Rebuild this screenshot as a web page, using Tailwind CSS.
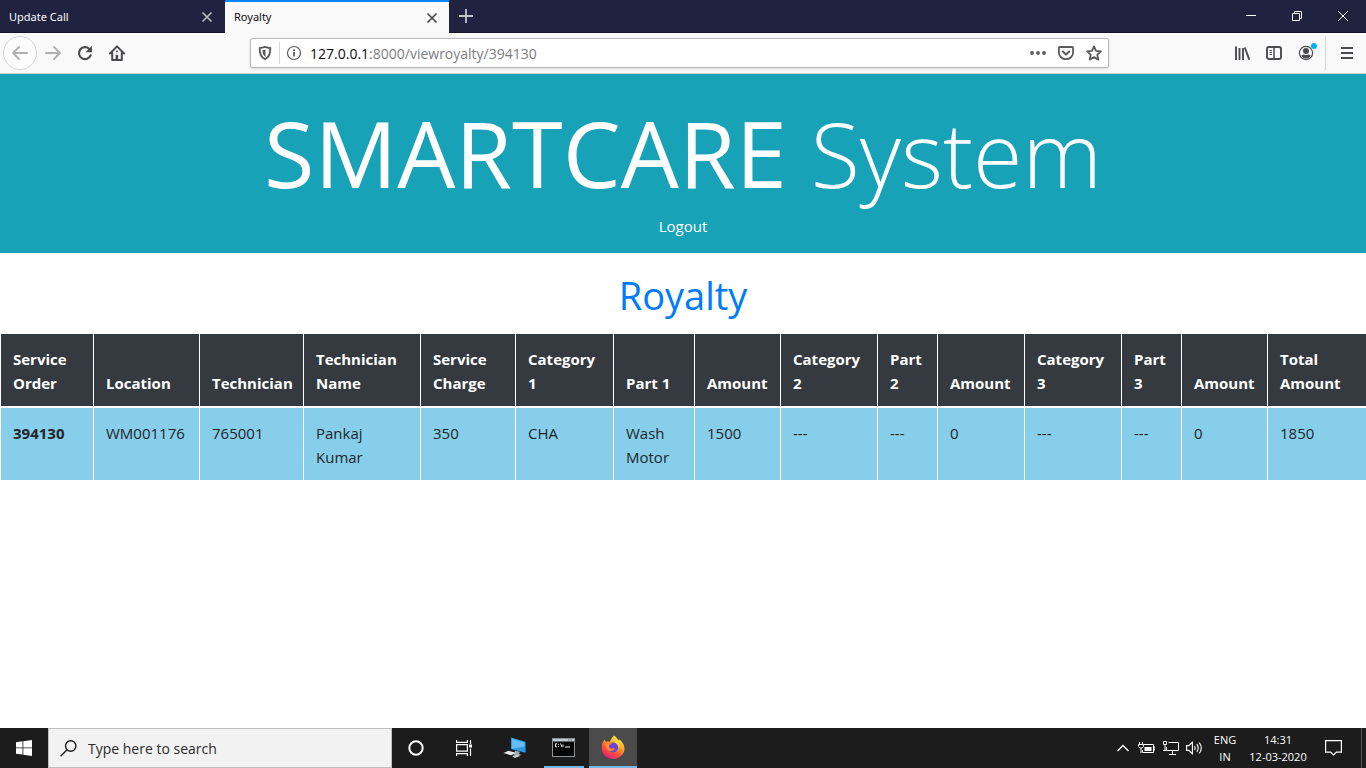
<!DOCTYPE html>
<html lang="en">
<head>
<meta charset="utf-8">
<title>Royalty</title>
<script src="https://cdn.jsdelivr.net/npm/@tailwindcss/browser@4"></script>
</head>
<body class="flex h-screen flex-col overflow-hidden bg-white font-['Open_Sans','Noto_Sans',sans-serif] text-[#212529]">

<!-- Tab strip -->
<div class="flex h-[33px] shrink-0 items-stretch border-b border-[#12132a] bg-[#202340]">
  <div class="flex w-[225px] items-center justify-between pr-[11px] pl-[9px] pt-[2px] text-[#f9f9fa]">
    <span class="font-['Noto_Sans',sans-serif] text-[11px]">Update Call</span>
    <button aria-label="Close Update Call"><svg class="block size-3.5" viewBox="0 0 14 14" fill="none" stroke="#b9bac4" stroke-width="1.7"><path d="M2.5 2.5l9 9M11.5 2.5l-9 9"/></svg></button>
  </div>
  <div class="-mb-px flex w-[224px] items-center justify-between border-t-2 border-[#0a84ff] bg-[#f9f9fa] pr-[10px] pl-[9px] text-[#0c0c0d]">
    <span class="font-['Noto_Sans',sans-serif] text-[11px]">Royalty</span>
    <button aria-label="Close Royalty"><svg class="block size-3.5" viewBox="0 0 14 14" fill="none" stroke="#4a4a4f" stroke-width="1.7"><path d="M2.5 2.5l9 9M11.5 2.5l-9 9"/></svg></button>
  </div>
  <button class="flex w-[34px] items-center justify-center" aria-label="New tab"><svg class="size-4" viewBox="0 0 16 16" stroke="#c4c5cf" stroke-width="1.8"><path d="M8 1v14M1 8h14"/></svg></button>
  <div class="ml-auto flex items-center">
    <button class="flex w-[46px] justify-center" aria-label="Minimize"><svg class="size-2.5" viewBox="0 0 10 10" stroke="#fff"><path d="M0 4.5h10"/></svg></button>
    <button class="flex w-[46px] justify-center" aria-label="Restore"><svg class="size-2.5" viewBox="0 0 10 10" fill="none" stroke="#fff"><path d="M.5 2.5h7v7h-7zM2.5 2.500V.5h7v7h-2"/></svg></button>
    <button class="flex w-[46px] justify-center" aria-label="Close"><svg class="size-2.5" viewBox="0 0 10 10" stroke="#fff"><path d="M0 0l10 10M10 0L0 10"/></svg></button>
  </div>
</div>

<!-- Toolbar -->
<div class="flex h-[41px] shrink-0 items-center border-b border-[#cfcfd1] bg-[#f9f9fa]">
  <div class="flex w-[250px] items-center pl-[3px]">
    <button class="flex size-[34px] items-center justify-center rounded-full border border-[#d4d4d5] bg-[#fcfcfc]" aria-label="Back"><svg class="size-4" viewBox="0 0 16 16" fill="none" stroke="#b1b1b3" stroke-width="2" stroke-linecap="round" stroke-linejoin="round"><path d="M15 8H1.500M7 2L1 8l6 6"/></svg></button>
    <button class="flex w-8 justify-center" aria-label="Forward"><svg class="size-4" viewBox="0 0 16 16" fill="none" stroke="#b1b1b3" stroke-width="2" stroke-linecap="round" stroke-linejoin="round"><path d="M1 8h13.500M9 2l6 6-6 6"/></svg></button>
    <button class="flex w-8 justify-center" aria-label="Reload"><svg class="size-4" viewBox="0 0 16 16"><path d="M12.300 4A6 6 0 1 0 13.600 10.300" fill="none" stroke="#4a4a4f" stroke-width="2.200" stroke-linecap="round"/><path d="M15 .8v6.400H8.600z" fill="#4a4a4f"/></svg></button>
    <button class="flex w-8 justify-center" aria-label="Home"><svg class="size-4" viewBox="0 0 16 16" fill="none" stroke="#4a4a4f" stroke-width="2" stroke-linejoin="round" stroke-linecap="round"><path d="M1 8.500L8 1.400l7 7.100M3.200 8v7h9.600V8"/><path d="M7.900 14V9.800" stroke-width="2.600" stroke-linecap="butt"/><path d="M8 6.500v.1"/></svg></button>
  </div>
  <div class="flex h-[30px] w-[859px] items-center rounded-xs border border-[#b9b9bb] bg-white shadow-sm">
    <svg class="ml-[6px] size-4" viewBox="0 0 16 16"><path d="M8 1.800c2 .8 3.700 1.100 5.300 1.200C13.500 9 11.500 12.500 8 14.200 4.500 12.500 2.500 9 2.700 3 4.300 2.900 6 2.600 8 1.800z" fill="none" stroke="#5a5a5e" stroke-width="1.900" stroke-linejoin="round"/><path d="M8.500 4.500v7.400C6.200 10.500 5.500 8 5.500 5.200z" fill="#5a5a5e"/></svg>
    <span class="ml-[6px] h-[22px] w-px bg-[#d7d7db]"></span>
    <svg class="ml-[6px] size-4" viewBox="0 0 16 16" fill="none" stroke="#5a5a5e"><circle cx="8" cy="8" r="6.500" stroke-width="1.200"/><path d="M8 7v4.500M8 4.200v1.700" stroke-width="1.700"/></svg>
    <div class="ml-[8px] flex-1 pt-[2px] text-[14px] leading-5 text-[#7c7c80]"><span class="text-[#0c0c0d]">127.0.0.1</span>:8000/viewroyalty/394130</div>
    <div class="flex items-center gap-3 pr-[6px]">
      <button aria-label="Page actions"><svg class="block size-4" viewBox="0 0 16 16" fill="#5a5a5e"><circle cx="2" cy="8" r="1.900"/><circle cx="8" cy="8" r="1.900"/><circle cx="14" cy="8" r="1.900"/></svg></button>
      <button aria-label="Save to Pocket"><svg class="block size-4" viewBox="0 0 16 16" fill="none" stroke="#5a5a5e" stroke-width="1.800" stroke-linejoin="round" stroke-linecap="round"><path d="M1.900 2h12.200q1 0 1 1v4.500a7.100 6.700 0 0 1-14.200 0V3q0-1 1-1z"/><path d="M4.800 6.500L8 9.500l3.200-3" stroke-width="2"/></svg></button>
      <button aria-label="Bookmark this page"><svg class="block size-4" viewBox="0 0 16 16" fill="none" stroke="#5a5a5e" stroke-width="1.800" stroke-linejoin="round"><path d="M8 1.400l2 4.500 4.900.5-3.600 3.300 1 4.900L8 12.100l-4.300 2.500 1-4.900L1.100 6.400 6 5.900z"/></svg></button>
    </div>
  </div>
  <div class="ml-auto flex h-full items-center">
    <button class="flex w-8 justify-center" aria-label="Library"><svg class="size-4" viewBox="0 0 16 16" fill="none" stroke="#4a4a4f" stroke-width="1.900"><path d="M2 1.500V15M5.500 3v12M9 3v12M10.800 2.500l4.500 12.200"/></svg></button>
    <button class="flex w-8 justify-center" aria-label="Sidebars"><svg class="size-4" viewBox="0 0 16 16" fill="none" stroke="#4a4a4f"><rect x="1" y="2" width="14" height="12" rx="2" stroke-width="1.900"/><path d="M8 2.500v11" stroke-width="1.500"/><path d="M3.500 5.500H6M3.500 7.500H6M3.500 9.500H6"/></svg></button>
    <button class="relative flex w-8 justify-center" aria-label="Account"><svg class="size-4" viewBox="0 0 16 16"><circle cx="8" cy="8" r="6.600" fill="none" stroke="#4a4a4f" stroke-width="1.200"/><circle cx="8" cy="6" r="3" fill="#4a4a4f"/><path d="M3.200 10.700q1.400-1.300 2.700-1.300 2 1 4.200 0 1.300 0 2.700 1.300a5.500 5.500 0 0 1-9.600 0z" fill="#4a4a4f"/></svg><span class="absolute -top-[2px] right-[5px] size-1.5 rounded-full bg-[#00b3f4]"></span></button>
    <span class="ml-[3px] h-[34px] w-px bg-[#d7d7db]"></span>
    <button class="flex w-[40px] justify-center pl-[2px]" aria-label="Menu"><svg class="size-4" viewBox="0 0 16 16" stroke="#4a4a4f" stroke-width="1.900"><path d="M2 3h12M2 8h12M2 13h12"/></svg></button>
  </div>
</div>

<!-- Page -->
<main class="flex-1 overflow-hidden">
  <header class="bg-[#17a2b8] pt-[21px] pb-[14px] text-center text-white">
    <h1 class="pb-[3px] text-[92px] leading-[116px] font-normal">SMARTCARE <span class="text-[90px] font-light">System</span></h1>
    <a href="#" class="block text-[15px] leading-[25px]">Logout</a>
  </header>
  <h2 class="pt-[18px] pb-[14px] text-center text-[38px] leading-[48px] text-[#007bff]">Royalty</h2>
  <table class="w-full table-fixed border-collapse text-left text-[15px] leading-6">
    <colgroup>
      <col class="w-[93px]"><col class="w-[106px]"><col class="w-[104px]"><col class="w-[117px]"><col class="w-[95px]"><col class="w-[98px]"><col class="w-[81px]"><col class="w-[86px]"><col class="w-[97px]"><col class="w-[60px]"><col class="w-[87px]"><col class="w-[97px]"><col class="w-[60px]"><col class="w-[86px]"><col class="w-[99px]">
    </colgroup>
    <thead class="bg-[#343a40] align-bottom text-white [&_th]:border [&_th]:border-b-2 [&_th]:border-white [&_th]:pt-[13px] [&_th]:pb-[11px] [&_th]:pl-3 [&_th]:font-bold">
      <tr><th>Service<br>Order</th><th>Location</th><th>Technician</th><th>Technician<br>Name</th><th>Service<br>Charge</th><th>Category<br>1</th><th>Part 1</th><th>Amount</th><th>Category<br>2</th><th>Part<br>2</th><th>Amount</th><th>Category<br>3</th><th>Part<br>3</th><th>Amount</th><th>Total<br>Amount</th></tr>
    </thead>
    <tbody class="bg-[#87ceeb] align-top [&_td]:border [&_td]:border-white [&_td]:pt-[13px] [&_td]:pb-[11px] [&_td]:pl-3 [&_th]:border [&_th]:border-white [&_th]:pt-[13px] [&_th]:pb-[11px] [&_th]:pl-3">
      <tr><th scope="row" class="font-bold">394130</th><td>WM001176</td><td>765001</td><td>Pankaj<br>Kumar</td><td>350</td><td>CHA</td><td>Wash<br>Motor</td><td>1500</td><td>---</td><td>---</td><td>0</td><td>---</td><td>---</td><td>0</td><td>1850</td></tr>
    </tbody>
  </table>
</main>

<!-- Taskbar -->
<footer class="flex h-10 shrink-0 items-stretch bg-[#1c1c1c] text-white">
  <button class="flex w-12 items-center justify-center" aria-label="Start"><svg class="size-4" viewBox="0 0 16 16" fill="#fff"><path d="M0 2.200l6.500-.9v6.200H0zM7.300 1.200L16 0v7.500H7.300zM0 8.300h6.500v6.300L0 13.700zM7.300 8.300H16V16l-8.700-1.200z"/></svg></button>
  <label class="flex w-[344px] items-center border border-[#bdbdbd] bg-[#f2f2f2] pl-[11px]">
    <svg class="size-[17px] shrink-0" viewBox="0 0 17 17" fill="none" stroke="#1b1b1b" stroke-width="1.400"><circle cx="10.700" cy="6" r="5.200"/><path d="M7 9.800L.6 16.300"/></svg>
    <input type="text" aria-label="Search" placeholder="Type here to search" class="ml-[11px] min-w-0 flex-1 bg-transparent text-[14px] outline-none placeholder:text-[#2b2b2b]">
  </label>
  <button class="flex w-12 items-center justify-center" aria-label="Cortana"><svg class="size-4" viewBox="0 0 16 16" fill="none" stroke="#fff" stroke-width="2"><circle cx="8" cy="8" r="6.700"/></svg></button>
  <button class="flex w-12 items-center justify-center" aria-label="Task view"><svg class="size-4" viewBox="0 0 16 16" fill="none" stroke="#fff" stroke-width="1.200"><path d="M.6 0v2.400h10.800V0M.6 16v-2.400h10.800V16M.6 4.600h10.800v6.600H.6zM14.500 0v4M14.500 8.500V16"/><path d="M14.500 4.500v3" stroke-width="3"/></svg></button>
  <div class="flex w-[56px] items-center justify-center pr-[2px]"><button aria-label="This PC"><svg class="block h-[22px] w-6" viewBox="0 0 24 22"><path d="M8 .5l14.500 4.300v11L8 12z" fill="#2b9be8"/><path d="M9 1.800l12.500 3.700v4L9 12z" fill="#63bdf8"/><path d="M12 13.500l5 1.300-1 2.200 3 1-5 1-3-1z" fill="#9aa5ad"/><path d="M5.500 13.800l8 2.200-5.500 2.300-7.500-2.200z" fill="#e5e9eb"/><path d="M9 19l6-1.500 2 1.500-5 2z" fill="#c8ced2"/></svg></button></div>
  <button class="flex w-10 items-center justify-center border-b-2 border-[#76b9ed] pr-[2px] pt-[1px]" aria-label="Command Prompt"><svg class="h-[19px] w-[23px]" viewBox="0 0 23 19"><rect x=".5" y=".5" width="22" height="18" fill="#060606" stroke="#8c9296"/><path d="M1 1h21v2.500H1z" fill="#c5cbd0"/><path d="M16 2h1.500M18.500 2H20" stroke="#4b6b8f"/><path d="M5 5.800H3.500v3H5M6.500 6v.8M6.500 8v.8M8.500 5.500l1.500 3.500M11 6.500v2.400M13 9h5" fill="none" stroke="#eee"/></svg></button>
  <button class="ml-[5px] flex w-12 items-center justify-center border-b-2 border-[#76b9ed] bg-[#4b4b4b]" aria-label="Firefox"><svg class="h-6 w-6" viewBox="0 0 24 24"><defs><linearGradient id="fox" x1=".8" y1="0" x2=".25" y2="1"><stop offset="0" stop-color="#fff44f"/><stop offset=".35" stop-color="#ffb02e"/><stop offset=".65" stop-color="#ff5634"/><stop offset="1" stop-color="#e31587"/></linearGradient><radialGradient id="globe"><stop offset="0" stop-color="#7a3df0"/><stop offset="1" stop-color="#5b4bd6"/></radialGradient></defs><path d="M13 .5c2 1.200 3.200 2.700 4 4.500l1.500-.6c3 2.500 5 5.500 5 9A11.300 10.500 0 0 1 .8 13.500C.6 10 1.500 7 3.500 4.800L5 7c1.400-.7 2.800-.6 4-.2C9.800 4.500 11 2.300 13 .5z" fill="url(#fox)"/><circle cx="12" cy="12.500" r="5" fill="url(#globe)"/><path d="M5 7c2-.8 4.500 0 5.800 1.500-.5 1-1.800 1-2.500 1.500-1 1.500 0 3.500 2 3.500 1.500 0 2-.8 3.500 0-1 2.500-4.500 3.500-7 1.500C4.500 13 4 10 5 7z" fill="#ff8a26"/><path d="M14.500 3c3.500 2 5 6 3.500 9.500-.5-2.500-2.200-4.500-4.500-5.500z" fill="#ffd83c"/></svg></button>

  <div class="ml-auto flex items-center">
    <button aria-label="Show hidden icons"><svg class="block h-2 w-3.5" viewBox="0 0 14 8" fill="none" stroke="#fff" stroke-width="1.300"><path d="M1.500 7L7 1.500 12.500 7"/></svg></button>
    <svg class="ml-2 h-3 w-[17px]" viewBox="0 0 17 12" fill="none" stroke="#fff"><path d="M6 2.500h9.500v8H4.500V8"/><path d="M15.500 5H17v3h-1.500"/><path d="M6.500 5h7v4h-7z" fill="#fff" stroke="none"/><path d="M1.500 0v2M4.500 0v2M.5 2.500h5v2L4 6H2L.5 4.500zM3 6v5"/></svg>
    <svg class="ml-2 h-3.5 w-4" viewBox="0 0 16 14" fill="none" stroke="#fff"><path d="M5.500 1.500h10v8H3.500V6M9.500 9.500v4M6 13.500h7"/><path d="M.5.500h3v3h-3zM2 3.500v6M0 9.500h3"/></svg>
    <svg class="ml-[7px] h-3.5 w-[18px]" viewBox="0 0 18 14" fill="none" stroke="#fff" stroke-width="1.100"><path d="M.6 4.600h2.200L6.400 1.300v11.400L2.800 9.400H.6zM8.500 5q1.300 2 0 4M10.800 3.200q2.800 3.800 0 7.600M13.200 1.600q4.200 5.400 0 10.800"/></svg>
    <div class="ml-[9px] w-6 text-center text-[11px] leading-[17px]">ENG<br>IN</div>
    <div class="ml-[11px] w-[60px] text-center text-[11px] leading-[17px] whitespace-nowrap">14:31<br>12-03-2020</div>
    <button class="ml-[17px]" aria-label="Notifications"><svg class="block h-4 w-[17px]" viewBox="0 0 17 16" fill="none" stroke="#fff" stroke-width="1.200"><path d="M.6.600h15.800v11.500h-5L8.500 15l-2.900-2.900h-5z"/></svg></button>
    <span class="ml-[19px] mr-1 h-10 w-px bg-[#5a5a5a]"></span>
  </div>
</footer>
</body>
</html>
